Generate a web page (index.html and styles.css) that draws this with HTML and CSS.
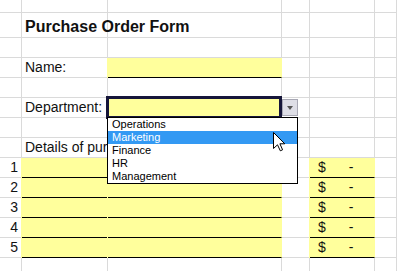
FILE: index.html
```html
<!DOCTYPE html>
<html>
<head>
    <title>Purchase Order Form</title>
    <link rel="stylesheet" href="styles.css">
</head>
<body>
    <div class="sheet">
        <div class="grid">
            <!-- row 0 -->
            <div class="cell"></div><div class="cell"></div><div class="cell"></div><div class="cell"></div><div class="cell"></div><div class="cell"></div>
            <!-- title -->
            <div class="cell"></div><div class="cell title">Purchase Order Form</div><div class="cell"></div><div class="cell"></div><div class="cell"></div><div class="cell"></div>
            <!-- blank -->
            <div class="cell"></div><div class="cell"></div><div class="cell"></div><div class="cell"></div><div class="cell"></div><div class="cell"></div>
            <!-- name -->
            <div class="cell"></div><div class="cell">Name:</div><div class="cell fill"></div><div class="cell"></div><div class="cell"></div><div class="cell"></div>
            <!-- blank -->
            <div class="cell"></div><div class="cell"></div><div class="cell"></div><div class="cell"></div><div class="cell"></div><div class="cell"></div>
            <!-- department -->
            <div class="cell"></div><div class="cell">Department:</div><div class="cell fill plain"></div><div class="cell"></div><div class="cell"></div><div class="cell"></div>
            <!-- blank -->
            <div class="cell"></div><div class="cell"></div><div class="cell"></div><div class="cell"></div><div class="cell"></div><div class="cell"></div>
            <!-- details (rest of the text sits under the open list) -->
            <div class="cell"></div><div class="cell clip">Details of pur</div><div class="cell"></div><div class="cell"></div><div class="cell"></div><div class="cell"></div>

            <div class="cell num">1</div><div class="cell fill"></div><div class="cell fill"></div><div class="cell"></div><div class="cell fill money"><span>$</span><span>-</span></div><div class="cell"></div>
            <div class="cell num">2</div><div class="cell fill"></div><div class="cell fill"></div><div class="cell"></div><div class="cell fill money"><span>$</span><span>-</span></div><div class="cell"></div>
            <div class="cell num">3</div><div class="cell fill"></div><div class="cell fill"></div><div class="cell"></div><div class="cell fill money"><span>$</span><span>-</span></div><div class="cell"></div>
            <div class="cell num">4</div><div class="cell fill"></div><div class="cell fill"></div><div class="cell"></div><div class="cell fill money"><span>$</span><span>-</span></div><div class="cell"></div>
            <div class="cell num">5</div><div class="cell fill"></div><div class="cell fill"></div><div class="cell"></div><div class="cell fill money"><span>$</span><span>-</span></div><div class="cell"></div>

            <div class="cell"></div><div class="cell"></div><div class="cell"></div><div class="cell"></div><div class="cell"></div><div class="cell"></div>
        </div>

        <div class="selection"></div>
        <div class="drop-btn"><span class="arrow"></span></div>
        <ul class="drop-list">
            <li>Operations</li>
            <li class="active">Marketing</li>
            <li>Finance</li>
            <li>HR</li>
            <li>Management</li>
        </ul>
        <svg class="cursor" width="13" height="20" viewBox="0 0 13 20">
            <path d="M0.5,0.5 L0.5,16.5 L4.5,12.8 L7.3,18.8 L9.6,17.8 L6.9,11.8 L11.8,11.8 Z" fill="#fff" stroke="#000" stroke-width="1"/>
        </svg>
    </div>
</body>
</html>
```

FILE: styles.css
```css
body {
    margin: 0;
    padding: 0;
    background-color: #fff;
    font-family: "Liberation Sans", Arial, sans-serif;
    overflow: hidden;
}

.sheet {
    position: relative;
    width: 397px;
    height: 271px;
    overflow: hidden;
}

.grid {
    display: grid;
    grid-template-columns: 22px 86px 174px 28px 65px 1fr;
    grid-template-rows: 13px 25px repeat(12, 20px);
}

.cell {
    box-sizing: border-box;
    border-right: 1px solid #dadada;
    border-bottom: 1px solid #dadada;
    display: flex;
    align-items: flex-end;
    padding: 0 0 1px 3px;
    font-size: 14px;
    line-height: 17px;
    color: #111;
    white-space: nowrap;
}

.title {
    font-size: 16px;
    font-weight: bold;
    line-height: 19px;
}

/* label runs up to where the open list starts */
.clip {
    overflow: hidden;
}

.fill {
    background-color: #ffff9c;
    border-right-color: #ffff9c;
    border-bottom-color: #000;
    box-shadow: -1px 0 0 #ffff9c;
}

.fill.plain {
    border-bottom-color: #dadada;
}

.num {
    justify-content: flex-end;
    padding-right: 3px;
}

.money {
    justify-content: flex-start;
    padding-left: 8px;
    gap: 23px;
}

.selection {
    position: absolute;
    left: 106px;
    top: 96px;
    width: 176px;
    height: 23px;
    box-sizing: border-box;
    border: 3px solid #16163a;
}

.drop-btn {
    position: absolute;
    left: 282px;
    top: 99px;
    width: 16px;
    height: 17px;
    box-sizing: border-box;
    background-color: #dedee6;
    border: 1px solid #a8a8b4;
    display: flex;
    align-items: center;
    justify-content: center;
}

.drop-btn .arrow {
    width: 0;
    height: 0;
    border-left: 3px solid transparent;
    border-right: 3px solid transparent;
    border-top: 4px solid #555;
    margin-top: 1px;
}

.drop-list {
    position: absolute;
    left: 107px;
    top: 117px;
    width: 191px;
    margin: 0;
    padding: 0;
    list-style: none;
    box-sizing: border-box;
    background-color: #fff;
    border: 1px solid #000;
    z-index: 2;
}

.drop-list li {
    height: 13px;
    line-height: 13px;
    font-size: 11px;
    padding-left: 4px;
    color: #000;
}

.drop-list li.active {
    background-color: #3399f3;
    color: #fff;
}

.cursor {
    position: absolute;
    left: 273px;
    top: 132px;
    z-index: 3;
}
```
